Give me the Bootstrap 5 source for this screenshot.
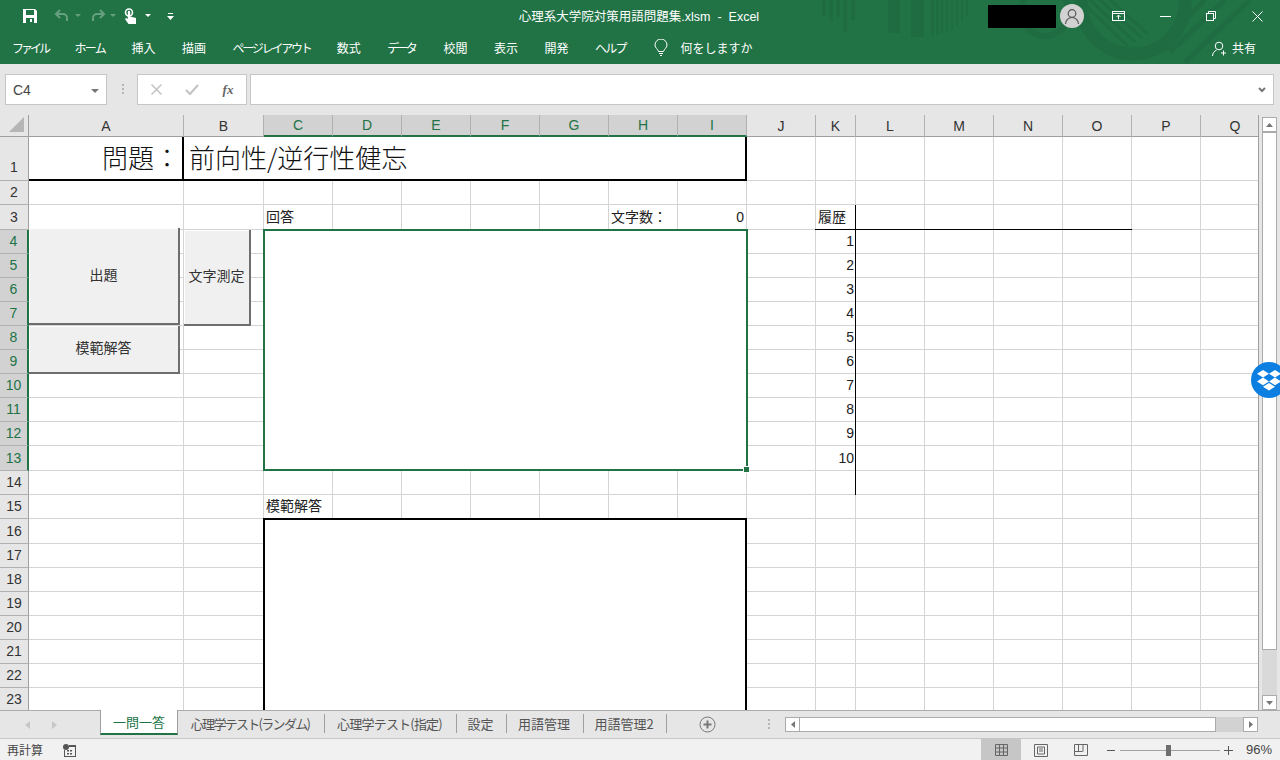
<!DOCTYPE html>
<html lang="ja">
<head>
<meta charset="UTF-8" />
<title>心理系大学院対策用語問題集.xlsm - Excel</title>
<link href="https://cdn.jsdelivr.net/npm/bootstrap@5.3.0/dist/css/bootstrap.min.css" rel="stylesheet" />
<style>
  html, body { height: 100%; overflow: hidden; }
  body { width: 1280px; height: 760px; background: #e6e6e6; color: #333;
    font-family: "Noto Sans CJK JP", "Liberation Sans", sans-serif; font-size: 13px; }
  .xl-latin { font-family: "Liberation Sans", "Noto Sans CJK JP", sans-serif; }

  .xl-head { background: #217346; }
  .xl-title { height: 32px; color: #fff; font-size: 12px; }
  .xl-art { left: 0; top: 0; width: 1280px; height: 64px; }
  .xl-qat { padding-left: 22px; height: 32px; z-index: 1; }
  .xl-doc { left: 639px; top: 7px; transform: translateX(-50%); white-space: pre; line-height: 18px; z-index: 1; font-size: 12.5px; }
  .xl-redact { width: 68px; height: 23px; background: #000; margin-right: 4px; }
  .xl-avatar { width: 24px; height: 24px; border-radius: 50%; background: #d2d2d2; margin-right: 12px; }
  .xl-winbtn { width: 46px; }
  .xl-ribbon { height: 32px; color: #fff; font-size: 12px; padding-left: 12px; gap: 26.5px; line-height: 16px; }
  .xl-kana { letter-spacing: -1.7px; }
  .xl-kana-file { letter-spacing: -3px; }
  .xl-kana-data { letter-spacing: -2.8px; }
  .xl-kana-tight { letter-spacing: -2.3px; }
  .xl-kana-wide { letter-spacing: -0.8px; }
  .xl-review { margin-left: 2px; }
  .xl-ask { margin-left: 2px; gap: 12px; }
  .xl-share { margin-left: auto; margin-right: 24px; gap: 5px; }

  .xl-fbar { height: 51px; background: #e6e6e6; padding: 10px 6px 10px 5px; }
  .xl-namebox { width: 102px; height: 31px; background: #fff; border: 1px solid #c6c6c6; padding: 2px 7px 0; font-size: 14px; color: #444; }
  .xl-fgrip { width: 30px; }
  .xl-fbtns { width: 110px; height: 31px; background: #fff; border: 1px solid #c6c6c6; margin-right: 3px; }
  .xl-fbtns > * { width: 36px; }
  .xl-finput { height: 31px; background: #fff; border: 1px solid #c6c6c6; padding-right: 7px; }

  .xl-sheetwrap { height: 595px; overflow: hidden; }
  .xl-sheet { display: grid; width: 1259px; height: 595px; overflow: hidden; background: #fff;
    grid-template-columns: 29px 155px 80px repeat(8, 69px) 40px repeat(5, 69px) 69px;
    grid-template-rows: 22px 44px 24px 25px repeat(9, 24px) 25px 24px 24px 25px repeat(7, 24px) 24px;
    border-right: 1px solid #9f9f9f; }
  .xl-cell { border-right: 1px solid #d4d4d4; border-bottom: 1px solid #d4d4d4; }
  .xl-colhd, .xl-rowhd { background: #e6e6e6; color: #333; font-size: 14px; line-height: 1;
    display: flex; align-items: center; justify-content: center; font-family: "Liberation Sans", sans-serif; }
  .xl-colhd { border-right: 1px solid #b1b1b1; border-bottom: 1px solid #9f9f9f; }
  .xl-rowhd { border-right: 1px solid #9f9f9f; border-bottom: 1px solid #b1b1b1; padding-bottom: 1px; }
  .xl-rowhd-tall { align-items: flex-end; padding-bottom: 6px; }
  .xl-on { background: #d2d2d2; color: #217346; }
  .xl-colhd.xl-on { border-bottom: 2px solid #217346; }
  .xl-rowhd.xl-on { border-right: 2px solid #217346; }
  .xl-corner { background: #e6e6e6; border-right: 1px solid #9f9f9f; border-bottom: 1px solid #9f9f9f; }

  .xl-txt { font-size: 14px; line-height: 1; color: #222; display: flex; align-items: center; white-space: nowrap; padding: 0 3px 4px 2px; }
  .xl-q-label { grid-area: 2 / 2 / 3 / 3; background: #fff; border-right: 2px solid #000; border-bottom: 2px solid #000;
    font-size: 26px; justify-content: flex-end; padding: 0 2px 3px 0; font-weight: 300; color: #111; }
  .xl-q-word { grid-area: 2 / 3 / 3 / 11; background: #fff; border-right: 2px solid #000; border-bottom: 2px solid #000;
    font-size: 26px; padding: 0 0 3px 5px; font-weight: 300; color: #111; }
  .xl-a3 { grid-area: 4 / 4 / 5 / 6; }
  .xl-cnt { grid-area: 4 / 9 / 5 / 10; padding-left: 2px; }
  .xl-zero { grid-area: 4 / 10 / 5 / 11; justify-content: flex-end; font-family: "Liberation Sans", sans-serif; padding-bottom: 1px; }
  .xl-answer { grid-area: 5 / 4 / 15 / 11; background: #fff; border: 2px solid #217346; margin: -1px -1px 0 -1px; position: relative; }
  .xl-handle { position: absolute; right: -4px; bottom: -4px; width: 7px; height: 7px; background: #217346; border: 1px solid #fff; }
  .xl-m15 { grid-area: 16 / 4 / 17 / 6; }
  .xl-model { grid-area: 17 / 4 / 26 / 11; background: #fff; border: 2px solid #000; border-bottom: 0; margin: -1px 0 0 -1px; }
  .xl-hist { grid-area: 4 / 12 / 5 / 13; }
  .xl-histline { grid-area: 4 / 12 / 5 / 17; border-bottom: 1px solid #000; margin-left: -1px; }
  .xl-histv { grid-area: 4 / 12 / 16 / 13; border-right: 1px solid #000; }
  .xl-num { justify-content: flex-end; padding: 0 2px 2px 0; font-size: 14px; font-family: "Liberation Sans", sans-serif; grid-column: 12 / 13; }

  .xl-btn { position: absolute; background: #f0f0f0; color: #333; border: 0; border-radius: 0; padding: 0 0 3px;
    border-right: 2px solid #6e6e6e; border-bottom: 2px solid #6e6e6e; font-size: 14px; z-index: 2;
    box-shadow: inset 1px 1px 0 #fff; }
  .xl-b1 { left: 29px; top: 113px; width: 151px; height: 97px; }
  .xl-b2 { left: 29px; top: 211px; width: 151px; height: 48px; }
  .xl-b3 { left: 184px; top: 115px; width: 67px; height: 96px; }

  .xl-vscroll { width: 21px; height: 595px; background: #e6e6e6; padding: 2px 3px 0 3px; }
  .xl-arrow { width: 15px; height: 15px; background: #fff; border: 1px solid #ababab; flex: none; }
  .xl-vthumb { height: 518px; background: #fff; border: 1px solid #ababab; flex: none; }
  .xl-vtrack { background: #d9d9d9; flex: 1 1 auto; margin-top: 0; }
  .xl-drop { position: absolute; left: 1251px; top: 362px; width: 36px; height: 36px; border-radius: 50%; background: #0d7fe0; z-index: 5; padding-left: 6px; }

  .xl-tabs { height: 29px; background: #e6e6e6; border-top: 1px solid #ababab; border-bottom: 1px solid #c6c6c6; }
  .xl-tabnav { width: 100px; height: 27px; gap: 17px; padding-left: 25px; }
  .xl-tab { height: 19px; display: flex; align-items: center; justify-content: center; border-right: 1px solid #9f9f9f; color: #555; font-size: 13px; white-space: nowrap; margin-top: 3px; padding-right: 2px; }
  .xl-tab.xl-tab-on { height: 25px; margin-top: -1px; background: #fff; color: #217346; border: 1px solid #9f9f9f; border-top: 0; border-bottom: 2px solid #217346; padding-right: 0; }
  .xl-tab1 { width: 78px; }
  .xl-tab2 { width: 147px; }
  .xl-tab3 { width: 132px; }
  .xl-tab4 { width: 50px; }
  .xl-tab5 { width: 77px; }
  .xl-tab6 { width: 83px; }
  .xl-tabrest { height: 27px; }
  .xl-plus { margin-left: 32px; }
  .xl-grip2 { margin-left: 52px; margin-right: 14px; }
  .xl-hscroll { width: 473px; height: 15px; margin-left: 0; }
  .xl-hthumb { width: 417px; height: 15px; background: #fff; border: 1px solid #ababab; margin-left: -1px; }
  .xl-htrack { flex: 1 1 auto; height: 15px; background: #d2d2d2; }

  .xl-status { height: 22px; background: #f1f1f1; color: #444; font-size: 12px; padding-left: 7px; }
  .xl-recalc { margin-right: 20px; }
  .xl-view { width: 40px; height: 22px; }
  .xl-view-on { background: #c6c6c6; }
  .xl-views { margin-left: auto; }
  .xl-minus { margin-left: 6px; }
  .xl-slider { width: 100px; height: 1px; background: #a0a0a0; margin: 0 4px 0 5px; }
  .xl-knob { left: 46px; top: -5px; width: 5px; height: 11px; background: #6e6e6e; }
  .xl-pct { width: 47px; text-align: right; padding-right: 8px; font-size: 13px; color: #444; font-family: "Liberation Sans", sans-serif; }
  .xl-fx { font: italic bold 13px "Liberation Serif", serif; color: #666; }
  .xl-undo-caret { margin: 0 9px 0 5px; }
</style>
</head>
<body>
  <div class="xl-head position-relative">
    <!-- title bar artwork -->
    <svg class="xl-art position-absolute" viewBox="0 0 1280 64" fill="none">
      <g fill="#1f6b42">
        <rect x="822" y="0" width="4" height="16"/><rect x="829" y="0" width="4" height="21"/><rect x="836" y="0" width="4" height="17"/>
        <rect x="843" y="0" width="4" height="32"/><rect x="851" y="0" width="4" height="20"/><rect x="888" y="0" width="12" height="33"/>
        <rect x="911" y="0" width="13" height="37"/><rect x="931" y="0" width="3" height="36"/><rect x="936" y="0" width="3" height="35"/>
        <rect x="941" y="0" width="2" height="34"/><rect x="946" y="0" width="2" height="32"/><rect x="951" y="0" width="2" height="30"/>
        <rect x="956" y="0" width="2" height="26"/><rect x="961" y="0" width="2" height="22"/><rect x="966" y="0" width="2" height="16"/>
      </g>
      <g stroke="#1f6b42" fill="none">
        <circle cx="1045" cy="12" r="24" stroke-width="6"/>
        <circle cx="1133" cy="2" r="52" stroke-width="13"/>
        <path d="M1080 0l48 46M1090 0l45 42M1100 0l42 38M1110 0l38 34" stroke-width="3"/>
        <path d="M1205 0l-20 20M1225 0l-55 52M1250 0l-65 62" stroke-width="5"/>
      </g>
    </svg>

    <div class="xl-title position-relative d-flex align-items-center">
      <div class="xl-qat d-flex align-items-center">
        <svg class="me-3" width="16" height="16" viewBox="0 0 16 16"><path d="M1 1h12l2 2v12H1z" fill="#fff"/><rect x="4" y="2" width="8" height="5" fill="#217346"/><rect x="4" y="10" width="8" height="5" fill="#217346"/><rect x="8" y="11" width="2" height="3" fill="#fff"/></svg>
        <svg width="16" height="14" viewBox="0 0 16 14" fill="none" stroke="#66a080" stroke-width="2"><path d="M6 1L2 5l4 4M2 5h7a4 4 0 0 1 4 4v3"/></svg>
        <svg class="xl-undo-caret" width="6" height="4" viewBox="0 0 6 4"><path d="M0 0h6L3 3z" fill="#66a080"/></svg>
        <svg width="16" height="14" viewBox="0 0 16 14" fill="none" stroke="#66a080" stroke-width="2"><path d="M10 1l4 4-4 4M14 5H7a4 4 0 0 0-4 4v3"/></svg>
        <svg class="mx-1" width="6" height="4" viewBox="0 0 6 4"><path d="M0 0h6L3 3z" fill="#66a080"/></svg>
        <svg class="ms-1" width="13" height="17" viewBox="0 0 13 17"><circle cx="5" cy="4.500" r="3.500" fill="none" stroke="#fff" stroke-width="1.600"/><path d="M3.800 4a1.200 1.200 0 0 1 2.400 0v4.500l5.800 1.500v6H4.500L1 11l1-1 1.800 1z" fill="#fff"/></svg>
        <svg class="ms-2" width="6" height="4" viewBox="0 0 6 4"><path d="M0 0h6L3 3z" fill="#fff"/></svg>
        <svg class="ms-3" width="7" height="7" viewBox="0 0 7 7"><path d="M1 0h5v1H1zM0 3h7L3.500 7z" fill="#fff"/></svg>
      </div>
      <div class="xl-doc position-absolute">心理系大学院対策用語問題集<span class="xl-latin">.xlsm  -  Excel</span></div>
      <div class="d-flex align-items-center ms-auto position-relative">
        <div class="xl-redact"></div>
        <div class="xl-avatar d-flex align-items-center justify-content-center">
          <svg width="16" height="16" viewBox="0 0 16 16" fill="none" stroke="#555" stroke-width="1.200"><circle cx="8" cy="5.500" r="3.800"/><path d="M1.500 16a6.500 6.500 0 0 1 13 0"/></svg>
        </div>
        <div class="xl-winbtn d-flex justify-content-center"><svg width="14" height="11" viewBox="0 0 14 11" fill="none" stroke="#fff"><rect x=".5" y=".5" width="12" height="9"/><path d="M1 2.500h11M6.500 8.500V4.500M4.500 6l2-2 2 2"/></svg></div>
        <div class="xl-winbtn d-flex justify-content-center"><svg width="11" height="1"><rect width="11" height="1" fill="#fff"/></svg></div>
        <div class="xl-winbtn d-flex justify-content-center"><svg width="10" height="10" viewBox="0 0 10 10" fill="none" stroke="#fff"><rect x=".5" y="2.500" width="7" height="7"/><path d="M2.500 2.500v-2h7v7h-2"/></svg></div>
        <div class="xl-winbtn d-flex justify-content-center"><svg width="11" height="11" viewBox="0 0 11 11" stroke="#fff"><path d="M.5.500l10 10M10.500.500l-10 10"/></svg></div>
      </div>
    </div>

    <div class="xl-ribbon position-relative d-flex align-items-center">
      <span class="xl-kana-file">ファイル</span>
      <span class="xl-kana">ホーム</span>
      <span>挿入</span>
      <span>描画</span>
      <span class="xl-kana-tight">ページ レイアウト</span>
      <span>数式</span>
      <span class="xl-kana-data">データ</span>
      <span class="xl-review">校閲</span>
      <span>表示</span>
      <span>開発</span>
      <span class="xl-kana">ヘルプ</span>
      <div class="xl-ask d-flex align-items-center">
        <svg width="14" height="18" viewBox="0 0 14 18" fill="none" stroke="#fff"><path d="M4.500 12.500C4 10 1 9 1 6a6 6 0 0 1 12 0c0 3-3 4-3.500 6.500z"/><path d="M5 14.500h4M6 16.500h2"/></svg>
        <span>何をしますか</span>
      </div>
      <div class="xl-share d-flex align-items-center">
        <svg width="15" height="15" viewBox="0 0 15 15" fill="none" stroke="#fff"><circle cx="7" cy="5" r="3.800"/><path d="M.5 15c0-3 2-5 4-5.800M11.500 9.500v5M9 12h5"/></svg>
        <span>共有</span>
      </div>
    </div>
  </div>

  <div class="xl-fbar d-flex align-items-center">
    <div class="xl-namebox d-flex align-items-center justify-content-between xl-latin">
      <span>C4</span>
      <svg width="8" height="4" viewBox="0 0 8 4"><path d="M0 0h8L4 4z" fill="#777"/></svg>
    </div>
    <div class="xl-fgrip d-flex justify-content-center">
      <svg width="3" height="11" viewBox="0 0 3 11" fill="#b5b5b5"><rect x="1" width="2" height="2"/><rect x="1" y="4" width="2" height="2"/><rect x="1" y="8" width="2" height="2"/></svg>
    </div>
    <div class="xl-fbtns d-flex align-items-center">
      <span class="d-flex justify-content-center"><svg width="11" height="11" viewBox="0 0 11 11" stroke="#c2c2c2" stroke-width="1.500"><path d="M.5.500l10 10M10.500.500l-10 10"/></svg></span>
      <span class="d-flex justify-content-center"><svg width="14" height="11" viewBox="0 0 14 11" fill="none" stroke="#c2c2c2" stroke-width="2"><path d="M1 6l4 4 8-9"/></svg></span>
      <span class="d-flex justify-content-center xl-fx">fx</span>
    </div>
    <div class="xl-finput flex-grow-1 d-flex align-items-center justify-content-end">
      <svg width="8" height="6" viewBox="0 0 8 6" fill="none" stroke="#777" stroke-width="2"><path d="M1 1l3 3 3-3"/></svg>
    </div>
  </div>

  <div class="xl-sheetwrap d-flex position-relative">
    <div class="xl-sheet position-relative" id="sheet">
      <div class="xl-txt xl-q-label">問題：</div>
      <div class="xl-txt xl-q-word">前向性/逆行性健忘</div>
      <div class="xl-txt xl-a3">回答</div>
      <div class="xl-txt xl-cnt">文字数：</div>
      <div class="xl-txt xl-zero">0</div>
      <div class="xl-answer"><span class="xl-handle"></span></div>
      <div class="xl-txt xl-m15">模範解答</div>
      <div class="xl-model"></div>
      <div class="xl-histline"></div>
      <div class="xl-histv"></div>
      <div class="xl-txt xl-hist">履歴</div>
      <button class="btn xl-btn xl-b1">出題</button>
      <button class="btn xl-btn xl-b2">模範解答</button>
      <button class="btn xl-btn xl-b3">文字測定</button>
    </div>
    <div class="xl-vscroll d-flex flex-column">
      <div class="xl-arrow d-flex align-items-center justify-content-center"><svg width="7" height="4" viewBox="0 0 7 4"><path d="M0 4h7L3.500 0z" fill="#777"/></svg></div>
      <div class="xl-vthumb"></div>
      <div class="xl-vtrack"></div>
      <div class="xl-arrow d-flex align-items-center justify-content-center"><svg width="7" height="4" viewBox="0 0 7 4"><path d="M0 0h7L3.500 4z" fill="#777"/></svg></div>
    </div>
  </div>

  <div class="xl-drop position-fixed d-flex align-items-center">
    <svg width="24" height="22" viewBox="0 0 24 22" fill="#fff"><path d="M6 1l6 3.800-6 3.800-6-3.800zM18 1l6 3.800-6 3.800-6-3.800zM6 8.600l6 3.800-6 3.800-6-3.800zM18 8.600l6 3.800-6 3.800-6-3.800zM12 14l6 3.800-6 3.800-6-3.800z"/></svg>
  </div>

  <div class="xl-tabs d-flex align-items-start">
    <div class="xl-tabnav d-flex align-items-center">
      <svg width="6" height="8" viewBox="0 0 6 8"><path d="M5 0v8L0 4z" fill="#c6c6c6"/></svg>
      <svg class="ms-1" width="6" height="8" viewBox="0 0 6 8"><path d="M0 0v8l5-4z" fill="#c6c6c6"/></svg>
    </div>
    <div class="xl-tab xl-tab1 xl-tab-on">一問一答</div>
    <div class="xl-tab xl-tab2"><span class="xl-kana">心理学テスト(ランダム)</span></div>
    <div class="xl-tab xl-tab3"><span class="xl-kana-wide">心理学テスト(指定)</span></div>
    <div class="xl-tab xl-tab4">設定</div>
    <div class="xl-tab xl-tab5">用語管理</div>
    <div class="xl-tab xl-tab6">用語管理2</div>
    <div class="xl-tabrest d-flex align-items-center">
      <svg class="xl-plus" width="17" height="17" viewBox="0 0 17 17" fill="none" stroke="#777"><circle cx="8.500" cy="8.500" r="7.500"/><path d="M4.500 8.500h8M8.500 4.500v8" stroke-width="2"/></svg>
      <svg class="xl-grip2" width="3" height="11" viewBox="0 0 3 11" fill="#b5b5b5"><rect width="2" height="2"/><rect y="4" width="2" height="2"/><rect y="8" width="2" height="2"/></svg>
      <div class="xl-hscroll d-flex align-items-center">
        <div class="xl-arrow d-flex align-items-center justify-content-center"><svg width="4" height="7" viewBox="0 0 4 7"><path d="M4 0v7L0 3.500z" fill="#777"/></svg></div>
        <div class="xl-hthumb"></div>
        <div class="xl-htrack"></div>
        <div class="xl-arrow d-flex align-items-center justify-content-center"><svg width="4" height="7" viewBox="0 0 4 7"><path d="M0 0v7l4-3.500z" fill="#777"/></svg></div>
      </div>
    </div>
  </div>

  <div class="xl-status d-flex align-items-center">
    <span class="xl-recalc">再計算</span>
    <svg width="13" height="13" viewBox="0 0 13 13" fill="#555"><circle cx="3" cy="3" r="3"/><path d="M6 1h7v12H1V6h1v6h10V3H6z"/><rect x="4" y="6" width="2" height="1.500"/><rect x="7" y="6" width="2" height="1.500"/><rect x="4" y="9" width="2" height="1.500"/><rect x="7" y="9" width="2" height="1.500"/></svg>
    <div class="xl-views d-flex align-items-center">
      <div class="xl-view xl-view-on d-flex align-items-center justify-content-center">
        <svg width="13" height="12" viewBox="0 0 13 12" fill="none" stroke="#666"><path d="M.5.500h12v11H.5zM.5 4h12M.5 8h12M4.500.500v11M8.500.500v11"/></svg>
      </div>
      <div class="xl-view d-flex align-items-center justify-content-center">
        <svg width="14" height="13" viewBox="0 0 14 13" fill="none" stroke="#666"><path d="M.5.500h13v12H.5zM3.500 3h7v7h-7zM5 5h4M5 7h4"/></svg>
      </div>
      <div class="xl-view d-flex align-items-center justify-content-center">
        <svg width="14" height="12" viewBox="0 0 14 12" fill="none" stroke="#666"><path d="M.5.500h13v11H.5zM.5 7.500h8M4.500.500v7M9 .500v7"/></svg>
      </div>
      <svg class="xl-minus" width="8" height="1"><rect width="8" height="1" fill="#555"/></svg>
      <div class="xl-slider position-relative"><div class="xl-knob position-absolute"></div></div>
      <svg width="9" height="9" viewBox="0 0 9 9" stroke="#555"><path d="M0 4.500h9M4.500 0v9"/></svg>
      <div class="xl-pct">96%</div>
    </div>
  </div>

  <script>
    // grid cells and headers, painted under the merged boxes already in #sheet
    const sheet = document.getElementById("sheet");
    const cols = "ABCDEFGHIJKLMNOPQ".split("");
    const rowCount = 24;
    const frag = document.createDocumentFragment();

    function addCell(className, col, row, text) {
      const el = document.createElement("div");
      el.className = className;
      el.style.gridColumn = col;
      el.style.gridRow = row;
      if (text !== undefined) el.textContent = text;
      frag.appendChild(el);
    }

    addCell("xl-corner d-flex align-items-end justify-content-end", 1, 1);
    frag.lastChild.innerHTML = '<svg class="me-1 mb-1" width="15" height="15" viewBox="0 0 15 15"><path d="M15 0v15H0z" fill="#b5b5b5"/></svg>';

    cols.forEach((name, i) => {
      const on = i >= 2 && i <= 8;
      addCell("xl-colhd" + (on ? " xl-on" : ""), i + 2, 1, name);
    });

    for (let r = 1; r <= rowCount; r++) {
      const on = r >= 4 && r <= 13;
      const tall = r === 1 ? " xl-rowhd-tall" : "";
      if (r <= 23) addCell("xl-rowhd" + tall + (on ? " xl-on" : ""), 1, r + 1, r);
      else addCell("xl-rowhd", 1, r + 1);
      cols.forEach((name, i) => addCell("xl-cell", i + 2, r + 1));
    }

    sheet.prepend(frag);

    // history numbers in column K
    for (let n = 1; n <= 10; n++) {
      const el = document.createElement("div");
      el.className = "xl-txt xl-num";
      el.style.gridRow = n + 4;
      el.textContent = n;
      sheet.appendChild(el);
    }
  </script>
  <script src="https://cdn.jsdelivr.net/npm/bootstrap@5.3.0/dist/js/bootstrap.bundle.min.js"></script>
</body>
</html>
